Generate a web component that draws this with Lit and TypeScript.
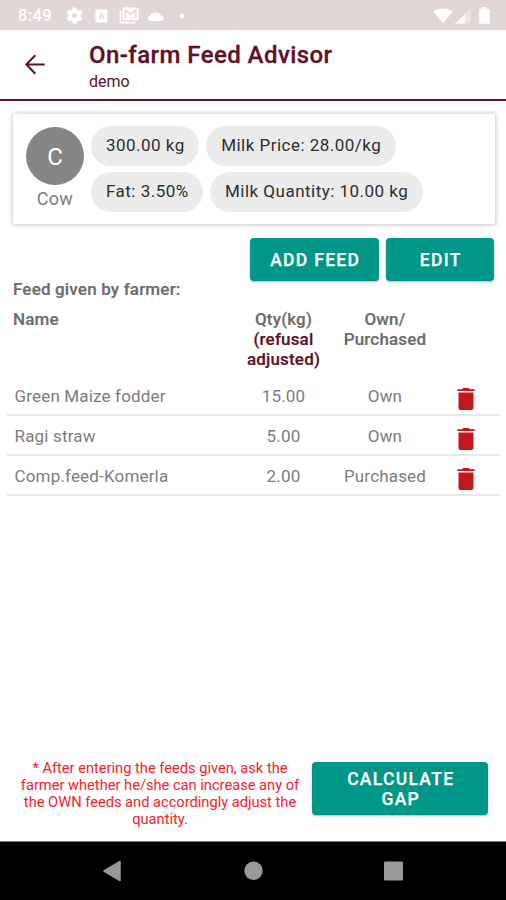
import { LitElement, html, css } from "lit";
import { customElement, property } from "lit/decorators.js";

interface Feed {
  name: string;
  qty: string;
  source: string;
}

@customElement("status-bar")
class StatusBar extends LitElement {
  static styles = css`
    :host {
      display: block;
      flex: none;
    }
    .bar {
      height: 30px;
      box-sizing: border-box;
      background: #e2d6d7;
      color: #fff;
      display: flex;
      align-items: center;
      padding: 1px 16px 0 18px;
      font-size: 16.5px;
      font-weight: 500;
    }
    .time {
      width: 48px;
      letter-spacing: 0.4px;
      line-height: 20px;
    }
    svg {
      display: block;
      fill: #fff;
      flex: none;
    }
    .gear { width: 17px; height: 17px; margin-right: 12px; }
    .a { margin-right: 11px; }
    .mail { margin-right: 8px; }
    .cloud { margin-right: 14px; }
    .gap { flex: 1; }
    .wifi { margin-right: 2px; }
    .signal { margin-right: 8px; }
  `;
  render() {
    return html`<div class="bar">
      <span class="time">8:49</span>
      <svg class="gear" viewBox="1.500 1.500 21 21">
        <path d="M19.430 12.980c.04-.32.07-.64.07-.98s-.03-.66-.07-.98l2.110-1.650c.19-.15.24-.42.12-.64l-2-3.460c-.12-.22-.39-.3-.61-.22l-2.490 1c-.52-.4-1.080-.73-1.690-.98l-.38-2.650C14.460 2.180 14.250 2 14 2h-4c-.25 0-.46.18-.49.42l-.38 2.650c-.61.25-1.170.59-1.690.98l-2.490-1c-.23-.09-.49 0-.61.22l-2 3.460c-.13.22-.07.49.12.64l2.110 1.650c-.04.32-.07.65-.07.98s.03.66.07.98l-2.110 1.650c-.19.15-.24.42-.12.64l2 3.460c.12.22.39.3.61.22l2.490-1c.52.4 1.080.73 1.690.98l.38 2.650c.03.24.24.42.49.42h4c.25 0 .46-.18.49-.42l.38-2.650c.61-.25 1.170-.59 1.690-.98l2.490 1c.23.09.49 0 .61-.22l2-3.460c.12-.22.07-.49-.12-.64l-2.110-1.650zM12 15a3 3 0 1 1 0-6 3 3 0 0 1 0 6z" />
      </svg>
      <svg class="a" width="13" height="14" viewBox="0 0 13 14">
        <path fill-rule="evenodd" d="M1.5 0.5h10a1 1 0 0 1 1 1v11a1 1 0 0 1-1 1h-10a1 1 0 0 1-1-1v-11a1 1 0 0 1 1-1zM6 3.8 3.6 10.2h1.2l.5-1.4h2.5l.5 1.4h1.2L7.1 3.8zM6.5 5.3l.9 2.5H5.7z" />
      </svg>
      <svg class="mail" width="20" height="17" viewBox="0 0 20 17">
        <path d="M0.6 3.5h1.6v11.3h14.5v1.7H2.2a1.6 1.6 0 0 1-1.6-1.7z" />
        <path fill-rule="evenodd" d="M5 .5h13a1.5 1.5 0 0 1 1.5 1.5v9.7a1.5 1.5 0 0 1-1.5 1.5H5a1.5 1.5 0 0 1-1.5-1.5V2A1.5 1.5 0 0 1 5 .5zM5.3 2.2v9.4h1.5V4.8l4.7 3.4 4.7-3.4v6.8h1.5V2.2h-.9l-5.3 4-5.3-4z" />
      </svg>
      <svg class="cloud" width="18" height="12" viewBox="0 0 18 12">
        <path d="M3.200 11a2.700 2.700 0 0 1-.4-5.200 6.300 6.300 0 0 1 11.200-.4 2.900 2.900 0 0 1 1 5.600z" />
      </svg>
      <svg width="6" height="6" viewBox="0 0 6 6"><circle cx="3" cy="3" r="2.5" /></svg>
      <span class="gap"></span>
      <svg class="wifi" width="20" height="16" viewBox="0 0 20 16">
        <path d="M0.3 3.5C6 -0.6 14 -0.6 19.7 3.5L10 15.5z" />
      </svg>
      <svg class="signal" width="16" height="16" viewBox="0 0 16 16">
        <path d="M15.5.5v15H.5z" opacity=".35" />
        <path d="M9.8 6.2v9.3H.5z" />
      </svg>
      <svg width="11" height="17" viewBox="0 0 11 17">
        <path d="M3.5 0h4v1.8H10a.8.8 0 0 1 .8.8v13.4a.8.8 0 0 1-.8.8H1a.8.8 0 0 1-.8-.8V2.600a.8.8 0 0 1 .8-.8h2.500z" />
      </svg>
    </div>`;
  }
}

@customElement("app-header")
class AppHeader extends LitElement {
  static styles = css`
    :host {
      display: block;
      flex: none;
    }
    .head {
      height: 71px;
      box-sizing: border-box;
      border-bottom: 2px solid #5c1f2a;
      display: flex;
      color: #5e1129;
      padding-left: 24px;
    }
    .back {
      margin-top: 24px;
      width: 65px;
      flex: none;
    }
    .back svg { display: block; }
    .title {
      font-size: 24px;
      font-weight: 500;
      line-height: 28px;
      margin: 11px 0 0;
      letter-spacing: 0.43px;
      -webkit-text-stroke: 0.3px;
    }
    .sub {
      font-size: 16px;
      line-height: 20px;
      margin-top: 3px;
    }
  `;
  render() {
    return html`<div class="head">
      <div class="back">
        <svg width="22" height="22" viewBox="0 0 22 22" fill="none" stroke="currentColor" stroke-width="2">
          <path d="M20.7 10.5H3M11.3 1.3 2.3 10.5l9 9.2" />
        </svg>
      </div>
      <div>
        <h1 class="title">On-farm Feed Advisor</h1>
        <div class="sub">demo</div>
      </div>
    </div>`;
  }
}

@customElement("animal-card")
class AnimalCard extends LitElement {
  @property({ attribute: false }) rows: string[][] = [];
  static styles = css`
    :host {
      display: block;
      flex: none;
    }
    .card {
      margin: 13px 11.500px 0 13px;
      height: 110px;
      box-sizing: border-box;
      background: #fff;
      box-shadow: 0 0 4px 1px rgba(0, 0, 0, 0.18), 0 1px 8px rgba(0, 0, 0, 0.04);
      display: flex;
    }
    .who {
      width: 84px;
      padding-top: 13px;
      display: flex;
      flex-direction: column;
      align-items: center;
      flex: none;
    }
    .avatar {
      width: 58px;
      height: 58px;
      border-radius: 50%;
      background: #858585;
      color: #fff;
      display: flex;
      align-items: center;
      justify-content: center;
      font-size: 24px;
      padding-top: 2px;
      box-sizing: border-box;
    }
    .kind {
      font-size: 18px;
      line-height: 22px;
      margin-top: 3px;
      color: #7c7c7c;
      letter-spacing: 0.3px;
    }
    .chips {
      margin-left: -6px;
      padding-top: 12px;
    }
    .line {
      display: flex;
      gap: 6.7px;
      height: 40px;
      margin-bottom: 6px;
    }
    .chip {
      border-radius: 20px;
      background: #ebebeb;
      color: #2e2e2e;
      font-size: 17px;
      line-height: 39px;
      padding: 0 14.7px 0 15px;
      letter-spacing: 0.48px;
      white-space: nowrap;
    }
  `;
  render() {
    return html`<div class="card">
      <div class="who">
        <div class="avatar">C</div>
        <div class="kind">Cow</div>
      </div>
      <div class="chips">
        ${this.rows.map((r) => html`<div class="line">${r.map((c) => html`<span class="chip">${c}</span>`)}</div>`)}
      </div>
    </div>`;
  }
}

@customElement("feed-table")
class FeedTable extends LitElement {
  @property({ attribute: false }) feeds: Feed[] = [];
  static styles = css`
    :host {
      display: block;
      flex: none;
    }
    .row {
      display: grid;
      grid-template-columns: 223px 107px 94px 1fr;
      box-sizing: border-box;
      margin: 0 6px 0 7px;
      font-size: 17px;
      color: #7c7c7c;
      letter-spacing: 0.17px;
    }
    .head {
      height: 67px;
      line-height: 20px;
      font-weight: 500;
      -webkit-text-stroke: 0.2px;
      color: #6c6c6c;
    }
    .item {
      height: 40px;
      border-bottom: 2px solid #e8e8e8;
      line-height: 40px;
    }
    .name { padding-left: 7.5px; }
    .head .name { padding-left: 6px; }
    .mid { text-align: center; }
    .mid + .mid { padding-left: 2px; }
    .warn { color: #5e1129; }
    .bin {
      display: flex;
      justify-content: center;
      padding-top: 10.5px;
    }
    .bin svg { display: block; }
  `;
  render() {
    return html`
      <div class="row head">
        <span class="name">Name</span>
        <span class="mid">Qty(kg)<br /><span class="warn">(refusal<br />adjusted)</span></span>
        <span class="mid">Own/<br />Purchased</span>
      </div>
      ${this.feeds.map(
        (f) => html`<div class="row item">
          <span class="name">${f.name}</span>
          <span class="mid">${f.qty}</span>
          <span class="mid">${f.source}</span>
          <span class="bin">
            <svg width="18" height="24" viewBox="0 0 18 24" fill="#c0181c">
              <path d="M1.5 5.4h15v15.6a2 2 0 0 1-2 2h-11a2 2 0 0 1-2-2zM.3 2.2h5L6.3 1h5.4l1 1.2h5v1.9H.3z" />
            </svg>
          </span>
        </div>`
      )}
    `;
  }
}

@customElement("nav-bar")
class NavBar extends LitElement {
  static styles = css`
    :host {
      display: block;
      flex: none;
    }
    .nav {
      height: 59px;
      box-sizing: border-box;
      border-top: 1px solid #777;
      background: #000;
    }
    svg { display: block; }
  `;
  render() {
    return html`<div class="nav">
      <svg width="506" height="58" viewBox="0 0 506 58" fill="#999">
        <path d="M104 29 120 19.5v19z" stroke="#999" stroke-width="1.5" stroke-linejoin="round" />
        <circle cx="253.5" cy="28.7" r="9.2" />
        <rect x="384" y="19.5" width="19" height="19" rx="1.2" />
      </svg>
    </div>`;
  }
}

@customElement("app-root")
class AppRoot extends LitElement {
  static styles = css`
    :host {
      display: flex;
      flex-direction: column;
      height: 900px;
      width: 506px;
      background: #fff;
      font-family: Roboto, "Noto Sans", sans-serif;
      overflow: hidden;
    }
    .actions {
      display: flex;
      justify-content: flex-end;
      gap: 7px;
      padding: 14px 12px 0 0;
      height: 43px;
      flex: none;
    }
    button {
      border: 0;
      border-radius: 4px;
      background: #009688;
      color: #fff;
      font: 500 17.5px/20px Roboto, "Noto Sans", sans-serif;
      letter-spacing: 1.3px;
      padding: 0 0 0 1.5px;
      box-shadow: 0 1px 2px rgba(0, 0, 0, 0.3);
      -webkit-text-stroke: 0.25px;
    }
    .add { width: 129px; }
    .edit { width: 108px; }
    .label {
      flex: none;
      margin: -2px 0 10px 13px;
      font-size: 17px;
      line-height: 20px;
      font-weight: 500;
      -webkit-text-stroke: 0.2px;
      letter-spacing: 0.17px;
      color: #6c6c6c;
    }
    .footer {
      margin-top: auto;
      height: 80px;
      display: flex;
      align-items: flex-start;
      padding: 0 18px 0 13px;
      flex: none;
    }
    .note {
      width: 294px;
      text-align: center;
      color: #f5222a;
      font-size: 14.65px;
      line-height: 17.1px;
      margin: -1px 5px 0 0;
    }
    .calc {
      width: 176px;
      height: 53px;
      margin-top: 1px;
      flex: none;
    }
  `;
  chips = [
    ["300.00 kg", "Milk Price: 28.00/kg"],
    ["Fat: 3.50%", "Milk Quantity: 10.00 kg"],
  ];
  feeds: Feed[] = [
    { name: "Green Maize fodder", qty: "15.00", source: "Own" },
    { name: "Ragi straw", qty: "5.00", source: "Own" },
    { name: "Comp.feed-Komerla", qty: "2.00", source: "Purchased" },
  ];
  render() {
    return html`
      <status-bar></status-bar>
      <app-header></app-header>
      <animal-card .rows=${this.chips}></animal-card>
      <div class="actions">
        <button class="add">ADD FEED</button>
        <button class="edit">EDIT</button>
      </div>
      <div class="label">Feed given by farmer:</div>
      <feed-table .feeds=${this.feeds}></feed-table>
      <div class="footer">
        <div class="note">
          * After entering the feeds given, ask the<br />farmer whether he/she can increase any of<br />the OWN
          feeds and accordingly adjust the<br />quantity.
        </div>
        <button class="calc">CALCULATE<br />GAP</button>
      </div>
      <nav-bar></nav-bar>
    `;
  }
}
